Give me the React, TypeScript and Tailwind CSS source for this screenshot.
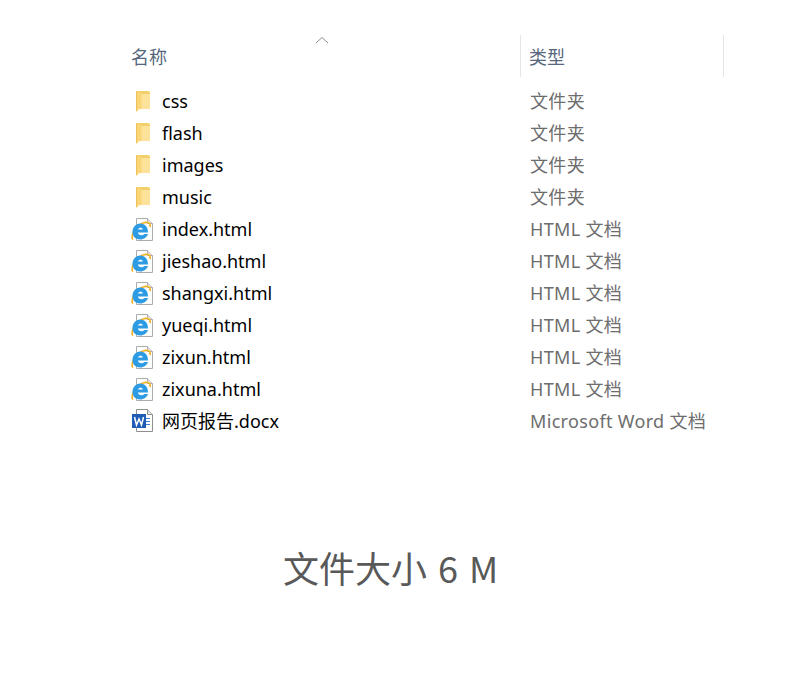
const folders = ["css", "flash", "images", "music"];
const pages = ["index.html", "jieshao.html", "shangxi.html", "yueqi.html", "zixun.html", "zixuna.html"];

const fontStack = "font-['Noto_Sans','Noto_Sans_CJK_SC',sans-serif]";

function FolderIcon() {
  return (
    <svg width="24" height="24" viewBox="0 0 24 24" className="shrink-0">
      <path d="M6 2 H18 Q20 2 20 4 V20 H6 Z" fill="#f3cf6c" />
      <path d="M11 5 H20 V20 H11 Z" fill="#fde29a" />
      <path d="M6 2 L10.500 4 Q11.500 4.500 11.500 6 V20 L8 20.500 L7.500 23 L6 22 Z" fill="#fad676" />
      <path d="M6.500 2 V22" stroke="#edc05a" />
    </svg>
  );
}

function IeIcon() {
  return (
    <svg width="24" height="24" viewBox="0 0 24 24" className="shrink-0">
      <path d="M6.500 1.500 H17.500 L22.500 6.500 V23.500 H6.500 Z" fill="#fff" stroke="#ababab" />
      <path d="M17.500 1.500 V6.500 H22.500" fill="#e8e8e8" stroke="#ababab" />
      <path d="M3 22.500 C0 19 6 8.500 13 6 C17.500 4.500 21 5.500 20 10" fill="none" stroke="#f3b32c" strokeWidth="1.800" />
      <path d="M2.500 14 C3 9.500 6.500 6.500 10.500 6.500 C15 6.500 18 10 18 15.500 H8 C8.300 18.500 12 19 14.500 17 H18 C16.500 21 13 22.500 10 22.500 C5 22.500 2 18.500 2.500 14 Z" fill="#2c9be3" />
      <path d="M8 12.500 C8.500 10 12.500 10 13 12.500 Z" fill="#fff" />
    </svg>
  );
}

function WordIcon() {
  return (
    <svg width="24" height="24" viewBox="0 0 24 24" className="shrink-0">
      <path d="M6.500 0.500 H17.500 L22.500 5.500 V22.500 H6.500 Z" fill="#fff" stroke="#8f8f8f" />
      <path d="M17.500 0.500 V5.500 H22.500" fill="#e8e8e8" stroke="#8f8f8f" />
      <path d="M16 9.500 H20 M16 12.500 H20 M16 15.500 H20" stroke="#3f7fd0" />
      <rect x="2" y="5" width="14" height="14" fill="#1f5cb5" />
      <path d="M4.500 8 L6.500 16 L9 10 L11.500 16 L13.500 8" fill="none" stroke="#fff" strokeWidth="1.500" />
    </svg>
  );
}

function Row({ icon, name, type }: { icon: React.ReactNode; name: string; type: string }) {
  return (
    <div className="flex h-8 items-center">
      <div className="flex w-[24px] justify-center">{icon}</div>
      <span className="ml-[8px] w-[368px] text-[18px] text-black">{name}</span>
      <span className="text-[18px] tracking-[0.33px] text-[#6d6d6d]">{type}</span>
    </div>
  );
}

export default function App() {
  return (
    <div className={`h-[700px] w-[800px] overflow-hidden bg-white ${fontStack}`}>
      <div className="pl-[130px] pt-[35px]">
        <div className="flex h-[42px] w-[594px]">
          <div className="relative flex w-[390px] items-center pl-[1px] pt-[2px] text-[18px] text-[#56677d]">
            名称
            <svg width="14" height="8" viewBox="0 0 14 8" className="absolute left-[185px] top-[1px]">
              <path d="M1 7 L7 1.500 L13 7" fill="none" stroke="#8a8a8a" />
            </svg>
          </div>
          <div className="flex flex-1 items-center border-x border-[#e5e5e5] pl-[8px] pt-[2px] text-[18px] text-[#56677d]">
            类型
          </div>
        </div>
        <div className="mt-[8px]">
          {folders.map((f) => (
            <Row key={f} icon={<FolderIcon />} name={f} type="文件夹" />
          ))}
          {pages.map((p) => (
            <Row key={p} icon={<IeIcon />} name={p} type="HTML 文档" />
          ))}
          <Row icon={<WordIcon />} name="网页报告.docx" type="Microsoft Word 文档" />
        </div>
      </div>
      <div className="mt-[103px] pl-[283px] font-['Noto_Sans_CJK_SC',sans-serif] text-[36px] leading-[54px] [word-spacing:3px] text-[#595959]">文件大小 6 M</div>
    </div>
  );
}
